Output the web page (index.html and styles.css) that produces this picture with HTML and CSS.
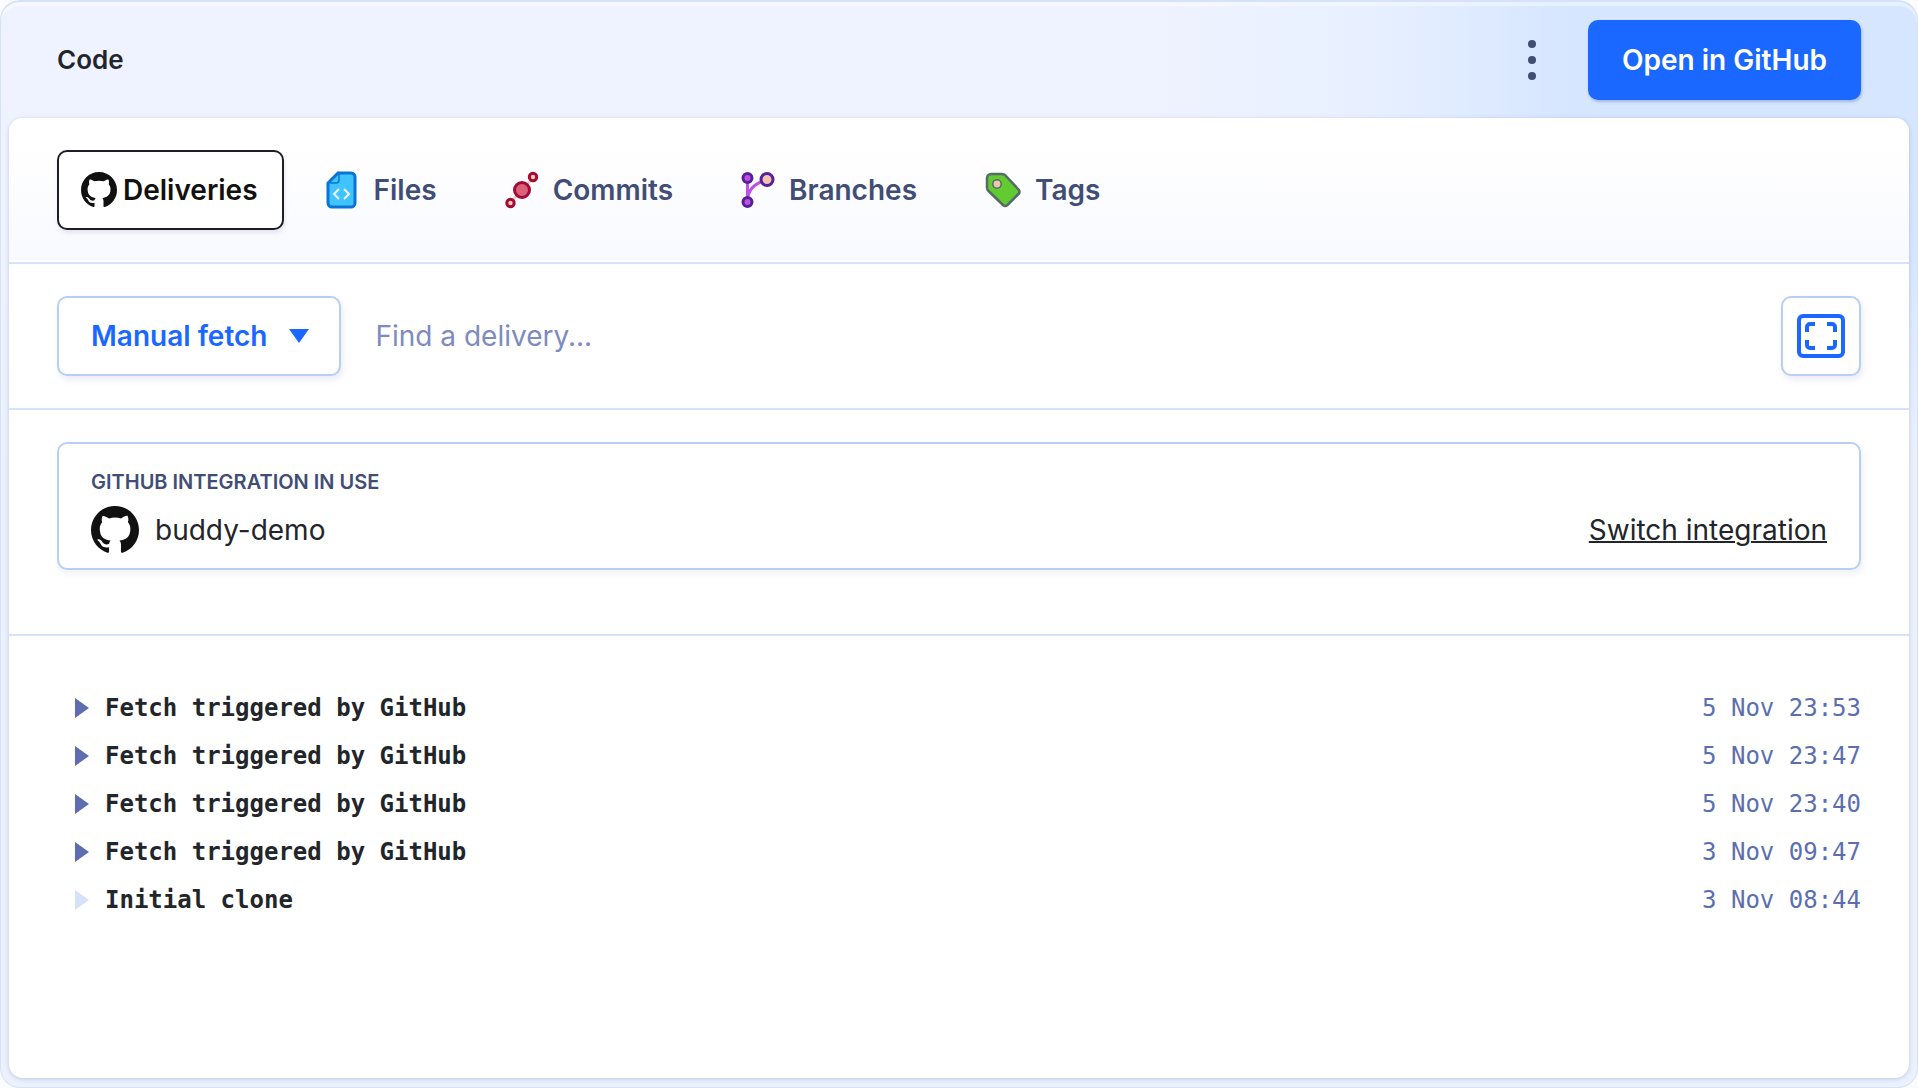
FILE: index.html
```html
<!DOCTYPE html>
<html lang="en">
<head>
<meta charset="utf-8">
<title>Code</title>
<link rel="stylesheet" href="styles.css">
</head>
<body>
<svg class="sprite" aria-hidden="true">
  <symbol id="github" viewBox="0 0 16 16"><path d="M8 0C3.58 0 0 3.58 0 8c0 3.54 2.29 6.53 5.47 7.59.4.07.55-.17.55-.38 0-.19-.01-.82-.01-1.49-2.01.37-2.53-.49-2.69-.94-.09-.23-.48-.94-.82-1.13-.28-.15-.68-.52-.01-.53.63-.01 1.08.58 1.23.82.72 1.21 1.87.87 2.33.66.07-.52.28-.87.51-1.07-1.78-.2-3.64-.89-3.64-3.95 0-.87.31-1.59.82-2.15-.08-.2-.36-1.02.08-2.12 0 0 .67-.21 2.2.82.64-.18 1.32-.27 2-.27s1.36.09 2 .27c1.53-1.04 2.2-.82 2.2-.82.44 1.1.16 1.92.08 2.12.51.56.82 1.27.82 2.15 0 3.07-1.87 3.75-3.65 3.95.29.25.54.73.54 1.48 0 1.07-.01 1.93-.01 2.2 0 .21.15.46.55.38A8.01 8.01 0 0 0 16 8c0-4.42-3.58-8-8-8z"/></symbol>
</svg>
<main class="window">
  <header class="header">
    <h1 class="title">Code</h1>
    <button class="more" type="button" aria-label="More options">
      <svg width="8" height="40" viewBox="0 0 8 40"><circle cx="4" cy="4" r="4"/><circle cx="4" cy="20" r="4"/><circle cx="4" cy="36" r="4"/></svg>
    </button>
    <button class="primary" type="button">Open in GitHub</button>
  </header>
  <section class="panel">
    <nav class="tabs">
      <a class="tab tab-active" href="#deliveries"><svg width="36" height="36"><use href="#github"/></svg>Deliveries</a>
      <a class="tab" href="#files">
        <svg width="34" height="38" viewBox="0 0 34 38"><path d="M12 2h13a4 4 0 0 1 4 4v26a4 4 0 0 1-4 4H6a4 4 0 0 1-4-4V12z" fill="#40c4ff" stroke="#0a73d6" stroke-width="3"/><path d="M13 3v6a3 3 0 0 1-3 3H4" fill="none" stroke="#0a73d6" stroke-width="1.5"/><path d="M13 18l-5 5 5 5M18 18l5 5-5 5" fill="none" stroke="#f0f4ff" stroke-width="2"/></svg>Files</a>
      <a class="tab" href="#commits">
        <svg width="34" height="38" viewBox="0 0 34 38"><path d="M5 32L29 6" stroke="#e8c4b4" stroke-width="2"/><circle cx="17" cy="19" r="7.5" fill="#d9627a" stroke="#a50a36" stroke-width="3"/><circle cx="28" cy="6" r="3.7" fill="#f4ccb0" stroke="#a50a36" stroke-width="3"/><circle cx="5.500" cy="32" r="3.7" fill="#f4ccb0" stroke="#a50a36" stroke-width="3"/></svg>Commits</a>
      <a class="tab" href="#branches">
        <svg width="34" height="38" viewBox="0 0 34 38"><path d="M6.500 7v24c0-13 7-18 18-22" fill="none" stroke="#bf50e0" stroke-width="3"/><circle cx="6.500" cy="7" r="4.500" fill="#bf50e0" stroke="#55209a" stroke-width="3"/><circle cx="6.500" cy="31" r="4.500" fill="#bf50e0" stroke="#55209a" stroke-width="3"/><circle cx="26" cy="8.500" r="6" fill="#f0c4ae" stroke="#55209a" stroke-width="3"/></svg>Branches</a>
      <a class="tab" href="#tags">
        <svg width="36" height="38" viewBox="0 0 36 38"><path d="M2 7a4 4 0 0 1 4-4h11q2 0 3.500 1.500l13 14q2 2.500 0 4.500L22.500 34q-2.500 2-4.500 0L3.500 20Q2 18.500 2 16.500z" fill="#62cb32" stroke="#556b66" stroke-width="2.500"/><circle cx="12" cy="13" r="4.200" fill="#f0c4ae" stroke="#556b66" stroke-width="1.500"/></svg>Tags</a>
    </nav>
    <div class="toolbar">
      <button class="outlined" type="button">Manual fetch<svg width="20" height="14"><path d="M0 0h20L10 14z"/></svg></button>
      <input class="search" type="text" aria-label="Find a delivery" placeholder="Find a delivery...">
      <button class="outlined outlined-icon" type="button" aria-label="Full screen">
        <svg width="48" height="44" viewBox="0 0 48 44"><path fill-rule="evenodd" d="M6 0h36a6 6 0 0 1 6 6v32a6 6 0 0 1-6 6H6a6 6 0 0 1-6-6V6a6 6 0 0 1 6-6zM6 4a2 2 0 0 0-2 2v32a2 2 0 0 0 2 2h36a2 2 0 0 0 2-2V6a2 2 0 0 0-2-2z"/><path d="M10 18v-5a3 3 0 0 1 3-3h5M30 10h5a3 3 0 0 1 3 3v5M38 26v5a3 3 0 0 1-3 3h-5M18 34h-5a3 3 0 0 1-3-3v-5" fill="none" stroke="#1a68ff" stroke-width="4"/></svg>
      </button>
    </div>
    <div class="integration-area">
      <div class="integration">
        <h2 class="caption">GITHUB INTEGRATION IN USE</h2>
        <div class="account">
          <svg width="48" height="48"><use href="#github"/></svg>
          <span>buddy-demo</span>
          <a class="switch" href="#switch">Switch integration</a>
        </div>
      </div>
    </div>
    <ul class="log">
      <li class="entry"><svg width="14" height="20"><path d="M0 0l14 10L0 20z"/></svg><span>Fetch triggered by GitHub</span><time>5 Nov 23:53</time></li>
      <li class="entry"><svg width="14" height="20"><path d="M0 0l14 10L0 20z"/></svg><span>Fetch triggered by GitHub</span><time>5 Nov 23:47</time></li>
      <li class="entry"><svg width="14" height="20"><path d="M0 0l14 10L0 20z"/></svg><span>Fetch triggered by GitHub</span><time>5 Nov 23:40</time></li>
      <li class="entry"><svg width="14" height="20"><path d="M0 0l14 10L0 20z"/></svg><span>Fetch triggered by GitHub</span><time>3 Nov 09:47</time></li>
      <li class="entry entry-empty"><svg width="14" height="20"><path d="M0 0l14 10L0 20z"/></svg><span>Initial clone</span><time>3 Nov 08:44</time></li>
    </ul>
  </section>
</main>
</body>
</html>
```
FILE: styles.css
```css
* { box-sizing: border-box; }

body {
  margin: 0;
  background: #fcfcff;
  color: #222529;
  font: 400 28px/40px Inter, "Liberation Sans", sans-serif;
}

button, input { font: inherit; margin: 0; }
button { cursor: pointer; }
svg { flex: none; }
.sprite { position: absolute; width: 0; height: 0; }

.window {
  display: flex;
  flex-direction: column;
  min-height: 100vh;
  padding: 0 8px 9px;
  border: 1px solid #d6e2fa;
  border-top-width: 2px;
  border-radius: 20px;
  background:
    linear-gradient(rgba(236, 241, 254, 0) 240px, #ecf1fe 460px),
    linear-gradient(90deg, #eff3ff 60%, #e8f0ff 71%, #d6e6ff 82%);
  box-shadow: inset 0 4px 0 rgba(255, 255, 255, 0.4);
}

.header {
  display: flex;
  align-items: center;
  padding: 18px 48px;
}

.title {
  flex: 1;
  margin: 0;
  font-size: 26px;
  font-weight: 600;
}

.more {
  display: flex;
  padding: 20px;
  margin-right: 32px;
  border: 0;
  background: none;
  fill: #424d75;
}

.primary {
  height: 80px;
  padding: 0 34px;
  border: 0;
  border-radius: 10px;
  background: #1a68ff;
  color: #fff;
  font-weight: 600;
  box-shadow: 1px 2px 3px rgba(50, 80, 150, 0.3);
}

.panel {
  flex: 1;
  border-radius: 14px;
  background: #fff;
  box-shadow: 0 1px 4px rgba(80, 100, 160, 0.3);
}

.tabs {
  display: flex;
  padding: 32px 48px;
  gap: 16px;
  border-radius: 14px 14px 0 0;
  border-bottom: 2px solid #d6e2fa;
  background: linear-gradient(#fff 20%, #f8f9fe);
  box-shadow: inset 0 -2px 0 #fff;
}

.tab {
  display: flex;
  align-items: center;
  height: 80px;
  padding: 0 26px;
  gap: 14px;
  color: #424d75;
  font-weight: 600;
  text-decoration: none;
}

.tab-active {
  padding: 0 24px 0 22px;
  gap: 6px;
  border: 2px solid #1d1f24;
  border-radius: 10px;
  background: #fff;
  color: #111;
  fill: #111;
  box-shadow: 1px 3px 4px rgba(66, 77, 150, 0.12);
}

.toolbar {
  display: flex;
  padding: 32px 48px;
  border-bottom: 2px solid #d6e2fa;
}

.outlined {
  display: flex;
  align-items: center;
  justify-content: center;
  height: 80px;
  padding: 0 30px 0 32px;
  gap: 22px;
  border: 2px solid #b8cff2;
  border-radius: 10px;
  background: #fff;
  color: #1a68ff;
  fill: #1a68ff;
  font-weight: 600;
  box-shadow: 2px 4px 6px rgba(66, 77, 150, 0.1);
}

.outlined-icon { width: 80px; padding: 0; }

.search {
  flex: 1;
  min-width: 0;
  padding: 0 34px;
  border: 0;
  outline: 0;
  background: none;
}

.search::placeholder { color: #7d8bbe; opacity: 1; }

.integration-area {
  padding: 32px 48px 64px;
  border-bottom: 2px solid #d6e2fa;
}

.integration {
  padding: 22px 32px 14px;
  border: 2px solid #b8cff2;
  border-radius: 10px;
  box-shadow: 2px 4px 6px rgba(66, 77, 150, 0.08);
}

.caption {
  margin: 0 0 8px;
  color: #424d75;
  font-size: 20px;
  line-height: 32px;
  font-weight: 600;
}

.account {
  display: flex;
  align-items: center;
  gap: 16px;
  fill: #111;
}

.switch {
  margin-left: auto;
  color: inherit;
  text-decoration-thickness: 2px;
}

.log {
  margin: 0;
  padding: 48px 48px 48px 66px;
  list-style: none;
  font: 24px/48px "DejaVu Sans Mono", monospace;
}

.entry {
  display: flex;
  align-items: center;
  gap: 16px;
  font-weight: 700;
  fill: #5c6eb0;
}

.entry-empty { fill: #d6e2fa; }

.entry time {
  margin-left: auto;
  color: #5c6eb0;
  font-weight: 400;
}
```
